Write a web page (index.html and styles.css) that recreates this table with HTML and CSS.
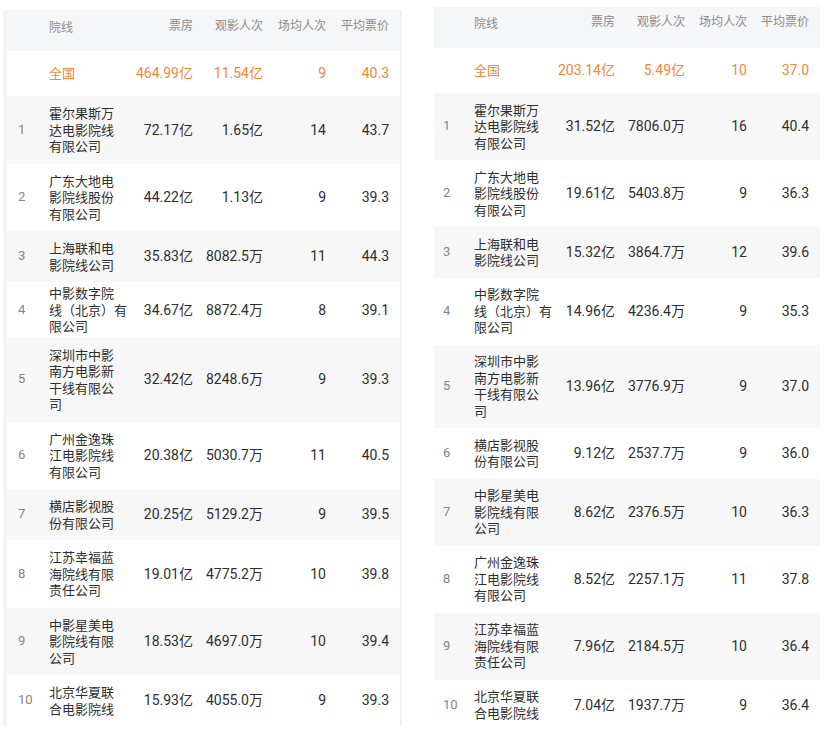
FILE: index.html
```html
<!DOCTYPE html>
<html lang="zh-CN">
<head>
<meta charset="utf-8">
<title>院线票房</title>
<link rel="stylesheet" href="styles.css">
</head>
<body>
<div class="page">
  <section class="board board--left">
    <div class="row row--head"><span class="rank"></span><span class="name">院线</span><span class="num">票房</span><span class="num">观影人次</span><span class="num">场均人次</span><span class="num">平均票价</span></div>
    <div class="row row--total"><span class="rank"></span><span class="name">全国</span><span class="num">464.99亿</span><span class="num">11.54亿</span><span class="num">9</span><span class="num">40.3</span></div>
    <div class="row row--alt"><span class="rank">1</span><span class="name">霍尔果斯万<br>达电影院线<br>有限公司</span><span class="num">72.17亿</span><span class="num">1.65亿</span><span class="num">14</span><span class="num">43.7</span></div>
    <div class="row"><span class="rank">2</span><span class="name">广东大地电<br>影院线股份<br>有限公司</span><span class="num">44.22亿</span><span class="num">1.13亿</span><span class="num">9</span><span class="num">39.3</span></div>
    <div class="row row--alt"><span class="rank">3</span><span class="name">上海联和电<br>影院线公司</span><span class="num">35.83亿</span><span class="num">8082.5万</span><span class="num">11</span><span class="num">44.3</span></div>
    <div class="row row--tight"><span class="rank">4</span><span class="name">中影数字院<br>线（北京）有<br>限公司</span><span class="num">34.67亿</span><span class="num">8872.4万</span><span class="num">8</span><span class="num">39.1</span></div>
    <div class="row row--alt"><span class="rank">5</span><span class="name">深圳市中影<br>南方电影新<br>干线有限公<br>司</span><span class="num">32.42亿</span><span class="num">8248.6万</span><span class="num">9</span><span class="num">39.3</span></div>
    <div class="row"><span class="rank">6</span><span class="name">广州金逸珠<br>江电影院线<br>有限公司</span><span class="num">20.38亿</span><span class="num">5030.7万</span><span class="num">11</span><span class="num">40.5</span></div>
    <div class="row row--alt"><span class="rank">7</span><span class="name">横店影视股<br>份有限公司</span><span class="num">20.25亿</span><span class="num">5129.2万</span><span class="num">9</span><span class="num">39.5</span></div>
    <div class="row"><span class="rank">8</span><span class="name">江苏幸福蓝<br>海院线有限<br>责任公司</span><span class="num">19.01亿</span><span class="num">4775.2万</span><span class="num">10</span><span class="num">39.8</span></div>
    <div class="row row--alt"><span class="rank">9</span><span class="name">中影星美电<br>影院线有限<br>公司</span><span class="num">18.53亿</span><span class="num">4697.0万</span><span class="num">10</span><span class="num">39.4</span></div>
    <div class="row"><span class="rank">10</span><span class="name">北京华夏联<br>合电影院线</span><span class="num">15.93亿</span><span class="num">4055.0万</span><span class="num">9</span><span class="num">39.3</span></div>
  </section>

  <section class="board board--right">
    <div class="row row--head"><span class="rank"></span><span class="name">院线</span><span class="num">票房</span><span class="num">观影人次</span><span class="num">场均人次</span><span class="num">平均票价</span></div>
    <div class="row row--total"><span class="rank"></span><span class="name">全国</span><span class="num">203.14亿</span><span class="num">5.49亿</span><span class="num">10</span><span class="num">37.0</span></div>
    <div class="row row--alt"><span class="rank">1</span><span class="name">霍尔果斯万<br>达电影院线<br>有限公司</span><span class="num">31.52亿</span><span class="num">7806.0万</span><span class="num">16</span><span class="num">40.4</span></div>
    <div class="row"><span class="rank">2</span><span class="name">广东大地电<br>影院线股份<br>有限公司</span><span class="num">19.61亿</span><span class="num">5403.8万</span><span class="num">9</span><span class="num">36.3</span></div>
    <div class="row row--alt"><span class="rank">3</span><span class="name">上海联和电<br>影院线公司</span><span class="num">15.32亿</span><span class="num">3864.7万</span><span class="num">12</span><span class="num">39.6</span></div>
    <div class="row"><span class="rank">4</span><span class="name">中影数字院<br>线（北京）有<br>限公司</span><span class="num">14.96亿</span><span class="num">4236.4万</span><span class="num">9</span><span class="num">35.3</span></div>
    <div class="row row--alt"><span class="rank">5</span><span class="name">深圳市中影<br>南方电影新<br>干线有限公<br>司</span><span class="num">13.96亿</span><span class="num">3776.9万</span><span class="num">9</span><span class="num">37.0</span></div>
    <div class="row"><span class="rank">6</span><span class="name">横店影视股<br>份有限公司</span><span class="num">9.12亿</span><span class="num">2537.7万</span><span class="num">9</span><span class="num">36.0</span></div>
    <div class="row row--alt"><span class="rank">7</span><span class="name">中影星美电<br>影院线有限<br>公司</span><span class="num">8.62亿</span><span class="num">2376.5万</span><span class="num">10</span><span class="num">36.3</span></div>
    <div class="row"><span class="rank">8</span><span class="name">广州金逸珠<br>江电影院线<br>有限公司</span><span class="num">8.52亿</span><span class="num">2257.1万</span><span class="num">11</span><span class="num">37.8</span></div>
    <div class="row row--alt"><span class="rank">9</span><span class="name">江苏幸福蓝<br>海院线有限<br>责任公司</span><span class="num">7.96亿</span><span class="num">2184.5万</span><span class="num">10</span><span class="num">36.4</span></div>
    <div class="row"><span class="rank">10</span><span class="name">北京华夏联<br>合电影院线</span><span class="num">7.04亿</span><span class="num">1937.7万</span><span class="num">9</span><span class="num">36.4</span></div>
  </section>
</div>
</body>
</html>
```

FILE: styles.css
```css
html, body {
  margin: 0;
  padding: 0;
  background: #ffffff;
}

body {
  font-family: Roboto, "Noto Sans CJK SC", sans-serif;
  color: #2e2e2e;
  width: 838px;
  height: 739px;
  overflow: hidden;
}

.page {
  display: flex;
  align-items: flex-start;
}

.board {
  display: flex;
  flex-direction: column;
  background: #ffffff;
}

.board--left {
  margin: 10px 0 0 3px;
  width: 393px;
  border-left: 4px solid #f3f3f4;
  border-right: 2px solid #f3f3f4;
}

.board--right {
  margin: 7px 0 0 32px;
  width: 386px;
}

.row {
  display: grid;
  align-items: center;
  padding: 9px 11px;
  background: #ffffff;
}

.board--left .row {
  grid-template-columns: 31px 72px 72px 70px 63px 63px;
  padding-left: 11px;
  padding-right: 11px;
}

.board--right .row {
  grid-template-columns: 31px 72px 69px 70px 62px 62px;
  padding: 8.75px 11px 8.75px 9px;
}

.row--alt {
  background: #f7f7f7;
}

.board .row--tight {
  padding-top: 3px;
  padding-bottom: 3px;
}

.board .row--head {
  background: #f5f6f8;
  align-items: start;
  height: 41px;
  box-sizing: border-box;
  padding-top: 8px;
  padding-bottom: 0;
  font-size: 12px;
  line-height: 17px;
  color: #8c8c8c;
}

.board--right .row--head {
  padding-top: 7px;
}

.board .row--total {
  height: 45px;
  box-sizing: border-box;
  padding-top: 0;
  padding-bottom: 0;
  color: #f2883a;
}

.rank {
  font-size: 13px;
  color: #858585;
  line-height: 16.5px;
}

.name {
  font-family: "Noto Sans CJK SC", sans-serif;
  font-size: 13px;
  line-height: 16.5px;
  white-space: nowrap;
}

.num {
  text-align: right;
  font-size: 14px;
  line-height: 16.5px;
  white-space: nowrap;
}

.row--head .name,
.row--head .num {
  font-size: 12px;
  line-height: 17px;
}

.row--total .name {
  font-size: 13px;
}
```
